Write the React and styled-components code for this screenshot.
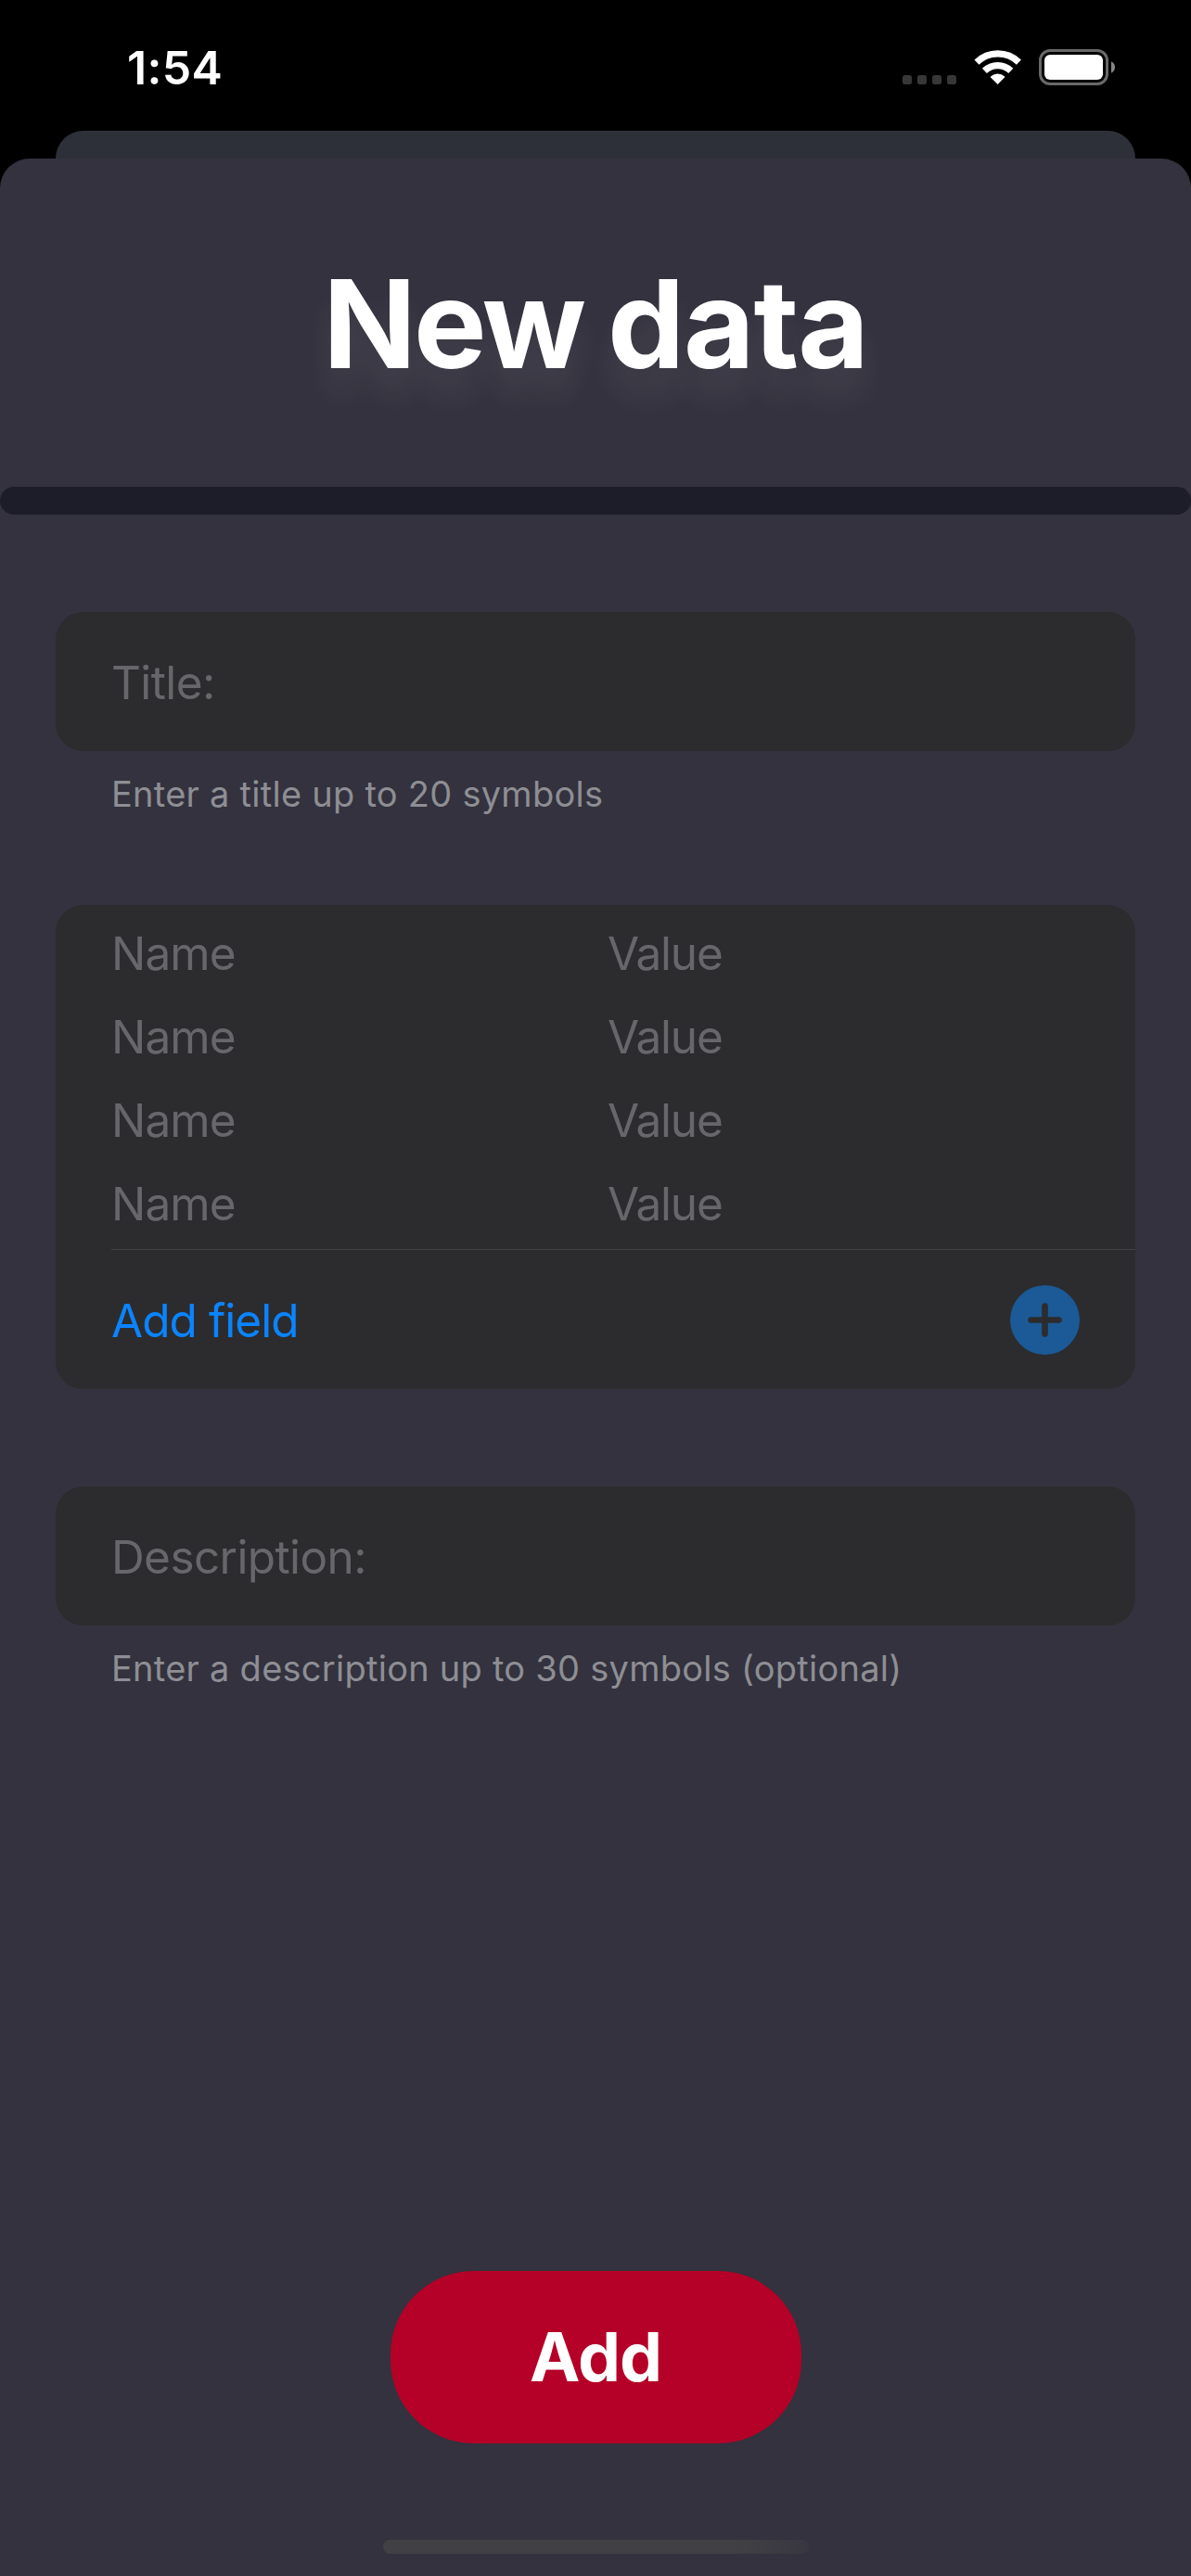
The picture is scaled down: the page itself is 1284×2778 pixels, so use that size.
import React from "react";
import styled, { createGlobalStyle } from "styled-components";

const GlobalStyle = createGlobalStyle`
  * { box-sizing: border-box; }
  body {
    margin: 0;
    background: #000;
    font-family: Inter, "Liberation Sans", sans-serif;
  }
`;

const Screen = styled.div`
  width: 1284px;
  height: 2778px;
  display: flex;
  flex-direction: column;
  background: #000;
  overflow: hidden;
`;

const StatusBar = styled.header`
  height: 141px;
  flex: none;
  display: flex;
  justify-content: space-between;
  align-items: flex-start;
  padding: 43px 82px 0 137px;
`;

const Clock = styled.span`
  font-size: 50px;
  line-height: 60px;
  font-weight: 600;
  color: #fff;
  letter-spacing: 0.3px;
`;

const StatusIcons = styled.svg`
  width: 230px;
  height: 40px;
  margin-top: 9px;
`;

const BackSheet = styled.div`
  height: 30px;
  flex: none;
  margin: 0 60px;
  background: #2e3039;
  border-radius: 30px 30px 0 0;
`;

const Sheet = styled.main`
  flex: 1;
  display: flex;
  flex-direction: column;
  background: #33323e;
  border-radius: 32px 32px 0 0;
`;

const Heading = styled.h1`
  margin: 0;
  height: 354px;
  padding: 98px 0 0;
  text-align: center;
  font-size: 132px;
  line-height: 160px;
  font-weight: 700;
  letter-spacing: -1.2px;
  word-spacing: -4px;
  color: #fff;
  text-shadow: 0 30px 32px rgba(255, 255, 255, 0.08);
`;

const TightWord = styled.span`
  letter-spacing: -3px;
`;

const Bar = styled.div`
  height: 30px;
  border-radius: 15px;
  background: #1c1d29;
`;

const Form = styled.section`
  display: flex;
  flex-direction: column;
  padding: 105px 60px 0;
`;

const Card = styled.div`
  background: #2c2c2e;
  border-radius: 30px;
  margin-top: ${(p) => p.$gap || 0}px;
`;

const Field = styled.div`
  height: 150px;
  display: flex;
  align-items: center;
  padding: 2px 60px 0;
`;

const Placeholder = styled.span`
  font-size: 49.5px;
  line-height: 60px;
  color: #67676b;
  letter-spacing: ${(p) => p.$track || 0}px;
`;

const Hint = styled.p`
  margin: 0;
  padding: 22px 60px 0;
  font-size: 38px;
  line-height: 48px;
  color: #8e8e94;
  letter-spacing: 0.26px;
`;

const Pairs = styled.div`
  display: grid;
  grid-template-columns: 535px 1fr;
  grid-auto-rows: 90px;
  align-items: center;
  padding: 7px 0 4px 60px;
`;

const AddField = styled.div`
  height: 151px;
  margin-left: 60px;
  padding-right: 60px;
  display: flex;
  align-items: center;
  justify-content: space-between;
  border-top: 1px solid #414144;
`;

const AddFieldLabel = styled.span`
  font-size: 49.5px;
  line-height: 60px;
  padding-top: 1px;
  color: #0a84ff;
  letter-spacing: -0.95px;
`;

const PlusIcon = styled.svg`
  width: 75px;
  height: 75px;
`;

const Footer = styled.footer`
  margin-top: auto;
  display: flex;
  flex-direction: column;
  align-items: center;
`;

const AddButton = styled.button`
  width: 443px;
  height: 186px;
  border: 0;
  padding: 0;
  border-radius: 90px;
  background: #b50027;
  color: #fff;
  font: 700 73px/90px Inter, "Liberation Sans", sans-serif;
  letter-spacing: -1px;
`;

const HomeIndicator = styled.div`
  width: 459px;
  height: 15px;
  margin: 104px 0 24px;
  border-radius: 8px;
  background: linear-gradient(100deg, #414145 82%, #383741 100%);
`;

const pairs = [0, 1, 2, 3];

export default function App() {
  return (
    <Screen>
      <GlobalStyle />
      <StatusBar>
        <Clock>1:54</Clock>
        <StatusIcons viewBox="972 52 230 40">
          {[973, 989, 1005, 1021].map((x) => (
            <rect key={x} x={x} y="81" width="10" height="10" rx="2.8" fill="#373737" />
          ))}
          <g fill="none" stroke="#fff">
            <path d="M1053 67.2A32.5 32.5 0 0 1 1098.4 67.2" strokeWidth="7.2" />
            <path d="M1061.4 76.4A20.3 20.3 0 0 1 1089.8 76.4" strokeWidth="7.2" />
          </g>
          <path d="M1068 83.6Q1067.700 83 1068.400 82.300A11 11 0 0 1 1082.900 82.300Q1083.500 83 1083 83.600L1075.600 91Z" fill="#fff" />
          <rect x="1121.500" y="54.500" width="72" height="36" rx="10.500" fill="none" stroke="#686868" strokeWidth="3" />
          <rect x="1126" y="59" width="63" height="27" rx="6" fill="#fff" />
          <path d="M1198 66.300Q1202 68.300 1202 72.500Q1202 76.700 1198 78.700Z" fill="#868686" />
        </StatusIcons>
      </StatusBar>
      <BackSheet />
      <Sheet>
        <Heading><TightWord>New</TightWord> data</Heading>
        <Bar />
        <Form>
          <Card>
            <Field><Placeholder $track={-0.6}>Title:</Placeholder></Field>
          </Card>
          <Hint>Enter a title up to 20 symbols</Hint>
          <Card $gap={96}>
            <Pairs>
              {pairs.map((i) => (
                <React.Fragment key={i}>
                  <Placeholder $track={-0.9}>Name</Placeholder>
                  <Placeholder $track={-1.2}>Value</Placeholder>
                </React.Fragment>
              ))}
            </Pairs>
            <AddField>
              <AddFieldLabel>Add field</AddFieldLabel>
              <PlusIcon viewBox="0 0 75 75">
                <circle cx="37.500" cy="37.500" r="37.500" fill="#1b5997" />
                <path d="M37.500 22.500V52.500M22.500 37.500H52.500" stroke="#2c2c2e" strokeWidth="6.600" strokeLinecap="round" />
              </PlusIcon>
            </AddField>
          </Card>
          <Card $gap={105}>
            <Field><Placeholder $track={-0.6}>Description:</Placeholder></Field>
          </Card>
          <Hint>Enter a description up to 30 symbols (optional)</Hint>
        </Form>
        <Footer>
          <AddButton>Add</AddButton>
          <HomeIndicator />
        </Footer>
      </Sheet>
    </Screen>
  );
}
